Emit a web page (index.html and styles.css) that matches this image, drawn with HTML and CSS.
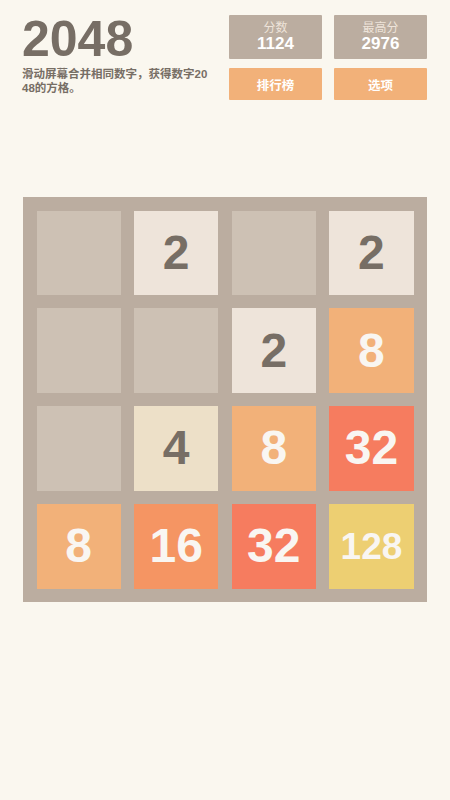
FILE: index.html
```html
<!DOCTYPE html>
<html lang="zh">
<head>
<meta charset="utf-8">
<link rel="stylesheet" href="styles.css">
</head>
<body>
<div class="page">
  <header class="header">
    <div class="intro">
      <h1 class="title">2048</h1>
      <p class="desc">滑动屏幕合并相同数字，获得数字2048的方格。</p>
    </div>
    <div class="panel">
      <div class="score-box"><span class="score-label">分数</span><span class="score-value">1124</span></div>
      <div class="score-box"><span class="score-label">最高分</span><span class="score-value">2976</span></div>
      <div class="btn">排行榜</div>
      <div class="btn">选项</div>
    </div>
  </header>
  <main class="board">
    <div class="tile empty"></div>
    <div class="tile t2">2</div>
    <div class="tile empty"></div>
    <div class="tile t2">2</div>

    <div class="tile empty"></div>
    <div class="tile empty"></div>
    <div class="tile t2">2</div>
    <div class="tile t8">8</div>

    <div class="tile empty"></div>
    <div class="tile t4">4</div>
    <div class="tile t8">8</div>
    <div class="tile t32">32</div>

    <div class="tile t8">8</div>
    <div class="tile t16">16</div>
    <div class="tile t32">32</div>
    <div class="tile t128">128</div>
  </main>
</div>
</body>
</html>
```

FILE: styles.css
```css
html, body {
  margin: 0;
  padding: 0;
  background: #faf7ef;
}
body {
  width: 450px;
  height: 800px;
  overflow: hidden;
  font-family: "Liberation Sans", "Noto Sans CJK SC", sans-serif;
  color: #776e65;
}
.page {
  padding: 14px 23px 0 22px;
}
.header {
  display: flex;
  justify-content: space-between;
  align-items: flex-start;
}
.intro {
  width: 188px;
}
.title {
  margin: 0;
  font-size: 50px;
  line-height: 51px;
  font-weight: bold;
  color: #776e65;
}
.desc {
  margin: 2px 0 0 0;
  font-size: 11.5px;
  line-height: 14px;
  font-weight: bold;
  word-break: break-all;
  color: #776e65;
}
.panel {
  margin-top: 1px;
  display: grid;
  grid-template-columns: 93px 93px;
  grid-template-rows: 44px 32px;
  column-gap: 12px;
  row-gap: 9px;
}
.score-box {
  background: #bbada0;
  border-radius: 1px;
  display: flex;
  flex-direction: column;
  align-items: center;
  padding-top: 6px;
  box-sizing: border-box;
}
.score-label {
  font-size: 12px;
  line-height: 14px;
  color: #eee4da;
}
.score-value {
  font-size: 17px;
  line-height: 18px;
  font-weight: bold;
  color: #ffffff;
}
.btn {
  background: #f2b179;
  border-radius: 1px;
  color: #ffffff;
  font-size: 12.5px;
  font-weight: bold;
  display: flex;
  align-items: center;
  justify-content: center;
}
.board {
  margin: 97px 0 0 1px;
  width: 404px;
  height: 405px;
  box-sizing: border-box;
  padding: 13.5px;
  background: #bbada0;
  display: grid;
  grid-template-columns: repeat(4, 1fr);
  grid-template-rows: repeat(4, 1fr);
  gap: 13.5px;
}
.tile {
  display: flex;
  align-items: center;
  justify-content: center;
  font-size: 48px;
  font-weight: bold;
  line-height: 1;
}
.empty { background: #cdc1b4; }
.t2 { background: #eee4da; color: #776e65; }
.t4 { background: #ede0c8; color: #776e65; }
.t8 { background: #f2b179; color: #f9f6f2; }
.t16 { background: #f59563; color: #f9f6f2; }
.t32 { background: #f67c5f; color: #f9f6f2; }
.t128 { background: #edcf72; color: #f9f6f2; font-size: 37px; }
```
